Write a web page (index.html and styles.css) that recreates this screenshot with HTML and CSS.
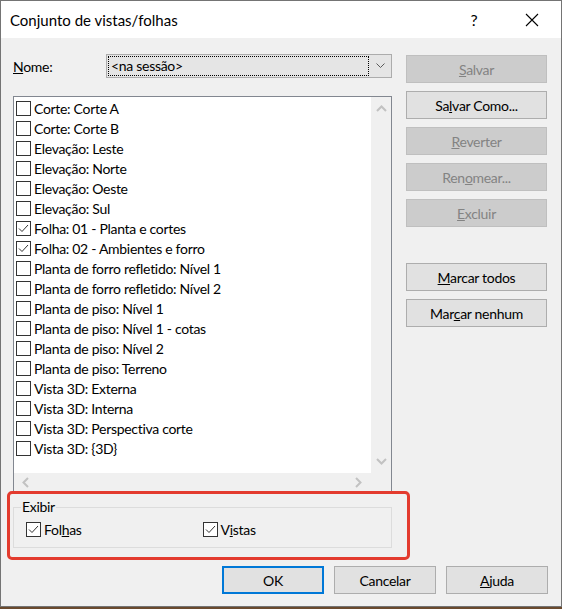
FILE: index.html
```html
<!DOCTYPE html>
<html lang="pt-BR">
<head>
    <meta charset="UTF-8">
    <title>Conjunto de vistas/folhas</title>
    <link rel="stylesheet" href="styles.css">
</head>
<body>
    <div class="window">
        <div class="titlebar">
            <span class="title">Conjunto de vistas/folhas</span>
            <span class="caption-btn">?</span>
            <span class="caption-btn">
                <svg width="14" height="14" viewBox="0 0 14 14"><path d="M1 1 L13 13 M13 1 L1 13" stroke="#000" stroke-width="1.1" fill="none"/></svg>
            </span>
        </div>

        <div class="content">
            <div class="main">
                <div class="left">
                    <div class="name-row">
                        <span class="name-label"><u>N</u>ome:</span>
                        <div class="combo">
                            <span class="combo-value">&lt;na sessão&gt;</span>
                            <span class="combo-arrow">
                                <svg width="9" height="6" viewBox="0 0 9 6"><path d="M0.5 0.5 L4.5 4.5 L8.5 0.5" stroke="#5a5a5a" fill="none"/></svg>
                            </span>
                        </div>
                    </div>

                    <div class="listbox">
                        <div class="list-area">
                            <div class="rows">
                                <div class="row"><span class="check"></span>Corte: Corte A</div>
                                <div class="row"><span class="check"></span>Corte: Corte B</div>
                                <div class="row"><span class="check"></span>Elevação: Leste</div>
                                <div class="row"><span class="check"></span>Elevação: Norte</div>
                                <div class="row"><span class="check"></span>Elevação: Oeste</div>
                                <div class="row"><span class="check"></span>Elevação: Sul</div>
                                <div class="row"><span class="check checked"><svg width="13" height="13" viewBox="0 0 13 13"><path d="M2 6.5 L5 9.5 L11 3" stroke="#333" fill="none"/></svg></span>Folha: 01 - Planta e cortes</div>
                                <div class="row"><span class="check checked"><svg width="13" height="13" viewBox="0 0 13 13"><path d="M2 6.5 L5 9.5 L11 3" stroke="#333" fill="none"/></svg></span>Folha: 02 - Ambientes e forro</div>
                                <div class="row"><span class="check"></span>Planta de forro refletido: Nível 1</div>
                                <div class="row"><span class="check"></span>Planta de forro refletido: Nível 2</div>
                                <div class="row"><span class="check"></span>Planta de piso: Nível 1</div>
                                <div class="row"><span class="check"></span>Planta de piso: Nível 1 - cotas</div>
                                <div class="row"><span class="check"></span>Planta de piso: Nível 2</div>
                                <div class="row"><span class="check"></span>Planta de piso: Terreno</div>
                                <div class="row"><span class="check"></span>Vista 3D: Externa</div>
                                <div class="row"><span class="check"></span>Vista 3D: Interna</div>
                                <div class="row"><span class="check"></span>Vista 3D: Perspectiva corte</div>
                                <div class="row"><span class="check"></span>Vista 3D: {3D}</div>
                            </div>
                            <div class="vscroll">
                                <svg width="11" height="7" viewBox="0 0 11 7"><path d="M1 6 L5.5 1.5 L10 6" stroke="#c2c2c2" stroke-width="2" fill="none"/></svg>
                                <svg width="11" height="7" viewBox="0 0 11 7"><path d="M1 1 L5.5 5.5 L10 1" stroke="#c2c2c2" stroke-width="2" fill="none"/></svg>
                            </div>
                        </div>
                        <div class="hscroll-row">
                            <div class="hscroll">
                                <svg width="7" height="11" viewBox="0 0 7 11"><path d="M6 1 L1.5 5.5 L6 10" stroke="#c2c2c2" stroke-width="2" fill="none"/></svg>
                                <svg width="7" height="11" viewBox="0 0 7 11"><path d="M1 1 L5.5 5.5 L1 10" stroke="#c2c2c2" stroke-width="2" fill="none"/></svg>
                            </div>
                            <div class="corner"></div>
                        </div>
                    </div>

                    <fieldset class="group">
                        <legend>Exibir</legend>
                        <div class="group-row">
                            <label class="opt"><span class="check checked"><svg width="13" height="13" viewBox="0 0 13 13"><path d="M2 6.5 L5 9.5 L11 3" stroke="#333" fill="none"/></svg></span>Fol<u>h</u>as</label>
                            <label class="opt"><span class="check checked"><svg width="13" height="13" viewBox="0 0 13 13"><path d="M2 6.5 L5 9.5 L11 3" stroke="#333" fill="none"/></svg></span>V<u>i</u>stas</label>
                        </div>
                    </fieldset>
                </div>

                <div class="right">
                    <div class="btn disabled"><span><u>S</u>alvar</span></div>
                    <div class="btn"><span>Sa<u>l</u>var Como...</span></div>
                    <div class="btn disabled"><span><u>R</u>everter</span></div>
                    <div class="btn disabled"><span>Ren<u>o</u>mear...</span></div>
                    <div class="btn disabled"><span><u>E</u>xcluir</span></div>
                    <div class="btn spaced"><span><u>M</u>arcar todos</span></div>
                    <div class="btn"><span>Mar<u>c</u>ar nenhum</span></div>
                </div>
            </div>

            <div class="footer">
                <div class="btn wide default">OK</div>
                <div class="btn wide">Cancelar</div>
                <div class="btn wide"><span><u>A</u>juda</span></div>
            </div>
        </div>

        <!-- annotation frame around the "Exibir" group -->
        <div class="highlight"></div>
    </div>
</body>
</html>
```

FILE: styles.css
```css
body {
    margin: 0;
    background-color: #6a4a2e;
    font-family: Lato, "Noto Sans", sans-serif;
    font-size: 14px;
    letter-spacing: -0.3px;
    color: #000;
}
.window {
    position: relative;
    width: 560px;
    height: 605px;
    border: 1px solid #747474;
    background-color: #f0f0f0;
}
.titlebar {
    height: 37px;
    background-color: #fff;
    display: flex;
    align-items: center;
    padding-left: 9px;
}
.title {
    flex: 1;
    font-size: 15px;
    letter-spacing: 0;
}
.caption-btn {
    width: 58px;
    height: 37px;
    display: flex;
    align-items: center;
    justify-content: center;
    font-size: 16px;
}
.content {
    padding: 16px 13px 0 12px;
}
.main {
    display: flex;
    gap: 14px;
}
.left {
    width: 379px;
}
.right {
    width: 141px;
    padding-top: 1px;
    display: flex;
    flex-direction: column;
    gap: 8px;
}
.btn {
    box-sizing: border-box;
    height: 28px;
    border: 1px solid #adadad;
    background-color: #e1e1e1;
    display: flex;
    align-items: center;
    justify-content: center;
}
.btn.disabled {
    background-color: #cccccc;
    border-color: #bfbfbf;
    color: #838383;
}
.btn.spaced {
    margin-top: 28px;
}
.btn.wide {
    width: 102px;
}
.btn.default {
    border: 2px solid #0078d7;
}
.name-row {
    display: flex;
    align-items: center;
    height: 24px;
}
.name-label {
    width: 93px;
}
.combo {
    box-sizing: border-box;
    width: 286px;
    height: 24px;
    border: 1px solid #acacac;
    background-color: #e5e5e5;
    display: flex;
    align-items: center;
    padding: 1px;
}
.combo-value {
    box-sizing: border-box;
    width: 261px;
    height: 20px;
    border: 1px dotted #000;
    line-height: 18px;
    padding-left: 2px;
}
.combo-arrow {
    flex: 1;
    display: flex;
    justify-content: center;
    padding-left: 1px;
}
.listbox {
    box-sizing: border-box;
    margin-top: 18px;
    height: 396px;
    border: 1px solid #828790;
    background-color: #fff;
    display: flex;
    flex-direction: column;
}
.list-area {
    flex: 1;
    display: flex;
}
.rows {
    flex: 1;
    padding: 1px 0 0 2px;
}
.row {
    height: 20px;
    display: flex;
    align-items: center;
    white-space: nowrap;
}
.check {
    box-sizing: border-box;
    width: 15px;
    height: 15px;
    border: 1px solid #333;
    background-color: #fff;
    margin-right: 3px;
    flex-shrink: 0;
    display: flex;
    align-items: center;
    justify-content: center;
}
.vscroll {
    width: 20px;
    background-color: #f0f0f0;
    display: flex;
    flex-direction: column;
    justify-content: space-between;
    align-items: center;
    padding: 8px 0 8px;
}
.hscroll-row {
    height: 18px;
    display: flex;
}
.hscroll {
    flex: 1;
    background-color: #f0f0f0;
    display: flex;
    align-items: center;
    justify-content: space-between;
    padding: 0 9px 0 8px;
}
.corner {
    width: 20px;
    background-color: #f0f0f0;
}
.group {
    margin: 6px 0 0;
    padding: 0 12px 8px;
    border: 1px solid #dcdcdc;
    min-width: 0;
}
.group legend {
    padding: 0 1px;
    margin-left: -5px;
    line-height: 18px;
}
.group-row {
    display: flex;
    margin-top: 3px;
    height: 20px;
}
.opt {
    display: flex;
    align-items: center;
    width: 182px;
}
.footer {
    display: flex;
    justify-content: flex-end;
    gap: 10px;
    margin-top: 18px;
}
.highlight {
    position: absolute;
    left: 6px;
    top: 490px;
    width: 403px;
    height: 69px;
    box-sizing: border-box;
    border: 3px solid #e33b2e;
    border-radius: 5px;
}
```
